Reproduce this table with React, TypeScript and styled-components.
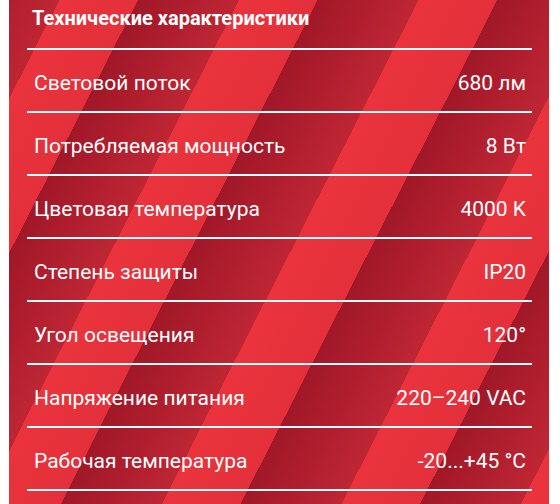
import React from 'react'
import styled, { createGlobalStyle } from 'styled-components'

const GlobalStyle = createGlobalStyle`
  html, body {
    margin: 0;
    padding: 0;
    background: #ffffff;
  }
  body {
    font-family: Roboto, 'Liberation Sans', Arial, sans-serif;
  }
`

// diagonal ribbon stripes, shifted so the first light band starts at x=60 on the top edge
const Panel = styled.section`
  margin: 0 11px 0 9px;
  min-height: 504px;
  padding: 0 17px 0 18px;
  box-sizing: border-box;
  overflow: hidden;
  background-color: #e4303b;
  background-image: repeating-linear-gradient(
    117deg,
    #ea333d 45px,
    #e3303a 115px,
    #a01828 115px,
    #a91b2b 140px,
    #bf2634 205px
  );
`

const Title = styled.h2`
  margin: 0;
  padding: 6px 0 18px 5px;
  font-size: 20px;
  line-height: 24px;
  font-weight: 700;
  color: #ffffff;
  border-bottom: 2px solid #ffffff;
`

const List = styled.dl`
  margin: 0;
  padding: 0;
`

const Row = styled.div`
  display: flex;
  justify-content: space-between;
  align-items: baseline;
  height: 63px;
  padding: 21px 6px 0 7px;
  box-sizing: border-box;
  border-bottom: 2px solid #ffffff;
  color: #ffffff;
  font-size: 21px;
  line-height: 24px;
`

const Label = styled.dt`
  margin: 0;
`

const Value = styled.dd`
  margin: 0;
  text-align: right;
`

const specs: [string, string][] = [
  ['Световой поток', '680 лм'],
  ['Потребляемая мощность', '8 Вт'],
  ['Цветовая температура', '4000 K'],
  ['Степень защиты', 'IP20'],
  ['Угол освещения', '120°'],
  ['Напряжение питания', '220–240 VAC'],
  ['Рабочая температура', '-20...+45 °C'],
]

const App: React.FC = () => {
  return (
    <>
      <GlobalStyle />
      <Panel>
        <Title>Технические характеристики</Title>
        <List>
          {specs.map(([label, value]) => (
            <Row key={label}>
              <Label>{label}</Label>
              <Value>{value}</Value>
            </Row>
          ))}
        </List>
      </Panel>
    </>
  )
}

export default App
